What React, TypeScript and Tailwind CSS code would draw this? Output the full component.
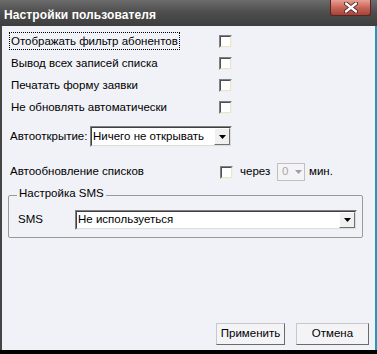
import React from "react";

const font = { fontFamily: '"Liberation Sans", Arial, sans-serif' };

function Check() {
  return (
    <div className="w-[13px] h-[13px] border-t border-l border-[#808080] border-r border-b border-r-[#f4f0e0] border-b-[#f4f0e0] bg-white">
      <div className="w-full h-full border-t border-l border-[#505050] border-r border-b border-r-[#e8e4d4] border-b-[#e8e4d4]" />
    </div>
  );
}

function Arrow({ disabled }: { disabled?: boolean }) {
  return (
    <svg width="7" height="4" viewBox="0 0 7 4">
      <path d="M0 0h7L3.5 4z" fill={disabled ? "#a0a0a0" : "#000"} />
    </svg>
  );
}

function Combo({ text, className }: { text: string; className: string }) {
  return (
    <div className={`flex border-t border-l border-[#808080] border-r border-b border-r-[#f0f0f0] border-b-[#f0f0f0] bg-white ${className}`}>
      <div className="flex flex-1 border-t border-l border-[#404040] border-r border-b border-r-[#dcdcdc] border-b-[#dcdcdc]">
        <div className="flex-1 flex items-center pl-[1px] text-[11.5px] text-black leading-none">{text}</div>
        <div className="w-[16px] flex items-center justify-center bg-[#f0f0f0] border-t border-l border-[#ffffff] border-r border-b border-r-[#707070] border-b-[#707070]">
          <Arrow />
        </div>
      </div>
    </div>
  );
}

function Btn({ text, w }: { text: string; w: string }) {
  return (
    <div className={`${w} h-[22px] border border-t-[#c8c8c8] border-l-[#c8c8c8] border-r-[#6a6a6a] border-b-[#6a6a6a] bg-[#f4f4f6] flex items-center justify-center text-[11.5px] text-black`}>
      {text}
    </div>
  );
}

export default function App() {
  const rows = [
    "Отображать фильтр абонентов",
    "Вывод всех записей списка",
    "Печатать форму заявки",
    "Не обновлять автоматически",
  ];
  return (
    <div className="w-[377px] h-[354px] flex flex-col bg-black overflow-hidden" style={font}>
      <div className="relative h-[26px] bg-gradient-to-b from-[#6c6c6c] via-[#4c4c4c] to-[#3e3e3e] flex items-center pl-[4px] pt-[4px]">
        <span className="text-white font-bold text-[12px] tracking-[0.1px]">Настройки пользователя</span>
        <div className="absolute left-[330px] top-0 w-[41px] h-[16px] rounded-b-[3px] border border-t-0 border-[#5a2520] bg-gradient-to-b from-[#e8a090] via-[#c8665a] to-[#a84238] flex items-center justify-center">
          <svg width="14" height="11" viewBox="0 0 14 11">
            <path d="M2 1.5L12 9.5M12 1.5L2 9.5" stroke="#3a1a18" strokeWidth="4" strokeLinecap="round" />
            <path d="M2 1.5L12 9.5M12 1.5L2 9.5" stroke="#fff" strokeWidth="2.4" strokeLinecap="round" />
          </svg>
        </div>
      </div>
      <div className="flex-1 flex bg-[#f1f2f7] border-l-[2px] border-l-[#454545] border-r-[2px] border-r-[#1f9ab8]">
        <div className="flex-1 flex flex-col text-[11.5px] text-black pt-[4px]">
          {rows.map((r, i) => (
            <div key={r} className="h-[22px] flex items-center">
              <div className="w-[217px] pl-[8px] flex">
                <span className={`px-[1px] py-[1px] leading-[14px] ${i === 0 ? "border border-dotted border-black -ml-[1px]" : ""}`}>{r}</span>
              </div>
              <Check />
            </div>
          ))}
          <div className="mt-[8px] h-[21px] flex items-center pl-[8px]">
            <span className="w-[80px]">Автооткрытие:</span>
            <Combo text="Ничего не открывать" className="w-[142px] h-[21px]" />
          </div>
          <div className="mt-[16px] h-[18px] flex items-center pl-[8px]">
            <span className="w-[210px]">Автообновление списков</span>
            <Check />
            <span className="ml-[7px] w-[37px]">через</span>
            <div className="w-[28px] h-[18px] border border-[#c0c0c0] bg-[#f4f4f6] flex items-center">
              <span className="flex-1 pl-[4px] text-[#a8a8a8]">0</span>
              <div className="w-[10px] flex items-center justify-center mr-[1px]"><Arrow disabled /></div>
            </div>
            <span className="ml-[4px]">мин.</span>
          </div>
          <div className="relative mt-[14px] ml-[6px] w-[355px] h-[43px] border border-[#9a9a9a] rounded-[2px]">
            <span className="absolute left-[8px] top-[-8px] px-[2px] bg-[#f1f2f7] leading-none">Настройка SMS</span>
            <div className="flex items-center pt-[14px] pl-[9px]">
              <span className="w-[57px]">SMS</span>
              <Combo text="Не используеться" className="w-[282px] h-[20px]" />
            </div>
          </div>
          <div className="flex-1" />
          <div className="flex justify-end gap-[11px] pr-[6px] pb-[5px]">
            <Btn text="Применить" w="w-[69px]" />
            <Btn text="Отмена" w="w-[73px]" />
          </div>
        </div>
      </div>
      <div className="h-[4px] bg-black" />
    </div>
  );
}
